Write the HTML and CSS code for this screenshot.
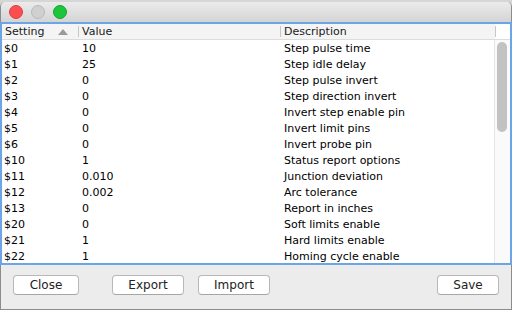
FILE: index.html
```html
<!DOCTYPE html>
<html lang="en">
  <head>
    <meta charset="UTF-8" />
    <title>Settings</title>
    <link rel="stylesheet" href="styles.css">
  </head>
  <body>
    <div class="window">
      <div class="title-bar">
        <span class="light red"></span>
        <span class="light gray"></span>
        <span class="light green"></span>
      </div>

      <div class="table">
        <div class="table-head">
          <div class="th first">Setting
            <svg class="sort" width="10" height="6" viewBox="0 0 10 6"><polygon points="0,6 5,0 10,6" fill="#9a9a9a"/></svg>
          </div>
          <div class="th">Value</div>
          <div class="th">Description</div>
          <div class="th corner"></div>
        </div>
        <div class="table-body">
          <div class="rows">
            <div class="row"><span>$0</span><span>10</span><span>Step pulse time</span></div>
            <div class="row"><span>$1</span><span>25</span><span>Step idle delay</span></div>
            <div class="row"><span>$2</span><span>0</span><span>Step pulse invert</span></div>
            <div class="row"><span>$3</span><span>0</span><span>Step direction invert</span></div>
            <div class="row"><span>$4</span><span>0</span><span>Invert step enable pin</span></div>
            <div class="row"><span>$5</span><span>0</span><span>Invert limit pins</span></div>
            <div class="row"><span>$6</span><span>0</span><span>Invert probe pin</span></div>
            <div class="row"><span>$10</span><span>1</span><span>Status report options</span></div>
            <div class="row"><span>$11</span><span>0.010</span><span>Junction deviation</span></div>
            <div class="row"><span>$12</span><span>0.002</span><span>Arc tolerance</span></div>
            <div class="row"><span>$13</span><span>0</span><span>Report in inches</span></div>
            <div class="row"><span>$20</span><span>0</span><span>Soft limits enable</span></div>
            <div class="row"><span>$21</span><span>1</span><span>Hard limits enable</span></div>
            <div class="row"><span>$22</span><span>1</span><span>Homing cycle enable</span></div>
          </div>
          <div class="scroll-track">
            <div class="scroll-thumb"></div>
          </div>
        </div>
      </div>

      <div class="button-bar">
        <button class="close">Close</button>
        <button class="export">Export</button>
        <button class="import">Import</button>
        <button class="save">Save</button>
      </div>
    </div>
  </body>
</html>
```

FILE: styles.css
```css
body,
div,
button {
  margin: 0;
  padding: 0;
  box-sizing: border-box;
}

body {
  width: 512px;
  height: 310px;
  overflow: hidden;
  background-color: #d6d6d6;
  font-family: "DejaVu Sans", sans-serif;
  color: #000;
}

.window {
  margin-top: 2px;
  height: 308px;
  background-color: #ececec;
  border-left: 1px solid #8c8c8c;
  border-right: 1px solid #8c8c8c;
  border-bottom: 1px solid #8c8c8c;
  border-radius: 5px 5px 0 0;
  display: flex;
  flex-direction: column;
}

.title-bar {
  height: 20px;
  background: linear-gradient(#ebebeb, #d4d4d4);
  border-radius: 5px 5px 0 0;
  display: flex;
  align-items: center;
  gap: 8px;
  padding-left: 8px;
}

.light {
  width: 12px;
  height: 12px;
  border-radius: 50%;
}

.light.red {
  background-color: #fc4e50;
  border: 1px solid #df3d3f;
}

.light.gray {
  background-color: #d0d0d0;
  border: 1px solid #b9b9b9;
}

.light.green {
  background-color: #1dc53c;
  border: 1px solid #15a52d;
}

.table {
  margin-left: -1px;
  margin-right: -1px;
  border: 2px solid #6ca5e6;
  background-color: #fff;
  font-size: 11px;
}

.table-head {
  display: grid;
  grid-template-columns: 76px 202px 214px 16px;
  height: 16px;
  background-color: #f4f4f4;
  border-bottom: 1px solid #dcdcdc;
}

.th {
  display: flex;
  align-items: center;
  padding-left: 4px;
  color: #1a1a1a;
  background: linear-gradient(#c6c6c6, #c6c6c6) no-repeat left center / 1px 11px;
}

.th.first {
  background: none;
  padding-left: 3px;
}

.th.corner {
  background-color: #fff;
  border-left: 1px solid #f4f4f4;
}

.sort {
  margin-left: 14px;
}

.table-body {
  display: flex;
  height: 223px;
  overflow: hidden;
}

.rows {
  width: 492px;
}

.row {
  display: grid;
  grid-template-columns: 76px 202px 214px;
  height: 16px;
  align-items: center;
}

.row span {
  padding-left: 4px;
}

.row span:first-child {
  padding-left: 2px;
}

.scroll-track {
  width: 16px;
  background-color: #fafafa;
  border-left: 1px solid #e6e6e6;
  padding: 2px 3px 0 2px;
}

.scroll-thumb {
  height: 90px;
  background-color: #c2c2c2;
  border-radius: 5px;
}

.button-bar {
  display: flex;
  align-items: flex-start;
  padding: 10px 12px 0 12px;
  flex-grow: 1;
}

.button-bar button {
  height: 20px;
  font-family: "DejaVu Sans", sans-serif;
  font-size: 12px;
  color: #222;
  background-color: #fff;
  border: 1px solid #b8b8b8;
  border-bottom-color: #a6a6a6;
  border-radius: 4px;
}

.close {
  width: 66px;
}

.export {
  width: 72px;
  margin-left: 33px;
}

.import {
  width: 72px;
  margin-left: 14px;
}

.save {
  width: 62px;
  margin-left: auto;
}
```
